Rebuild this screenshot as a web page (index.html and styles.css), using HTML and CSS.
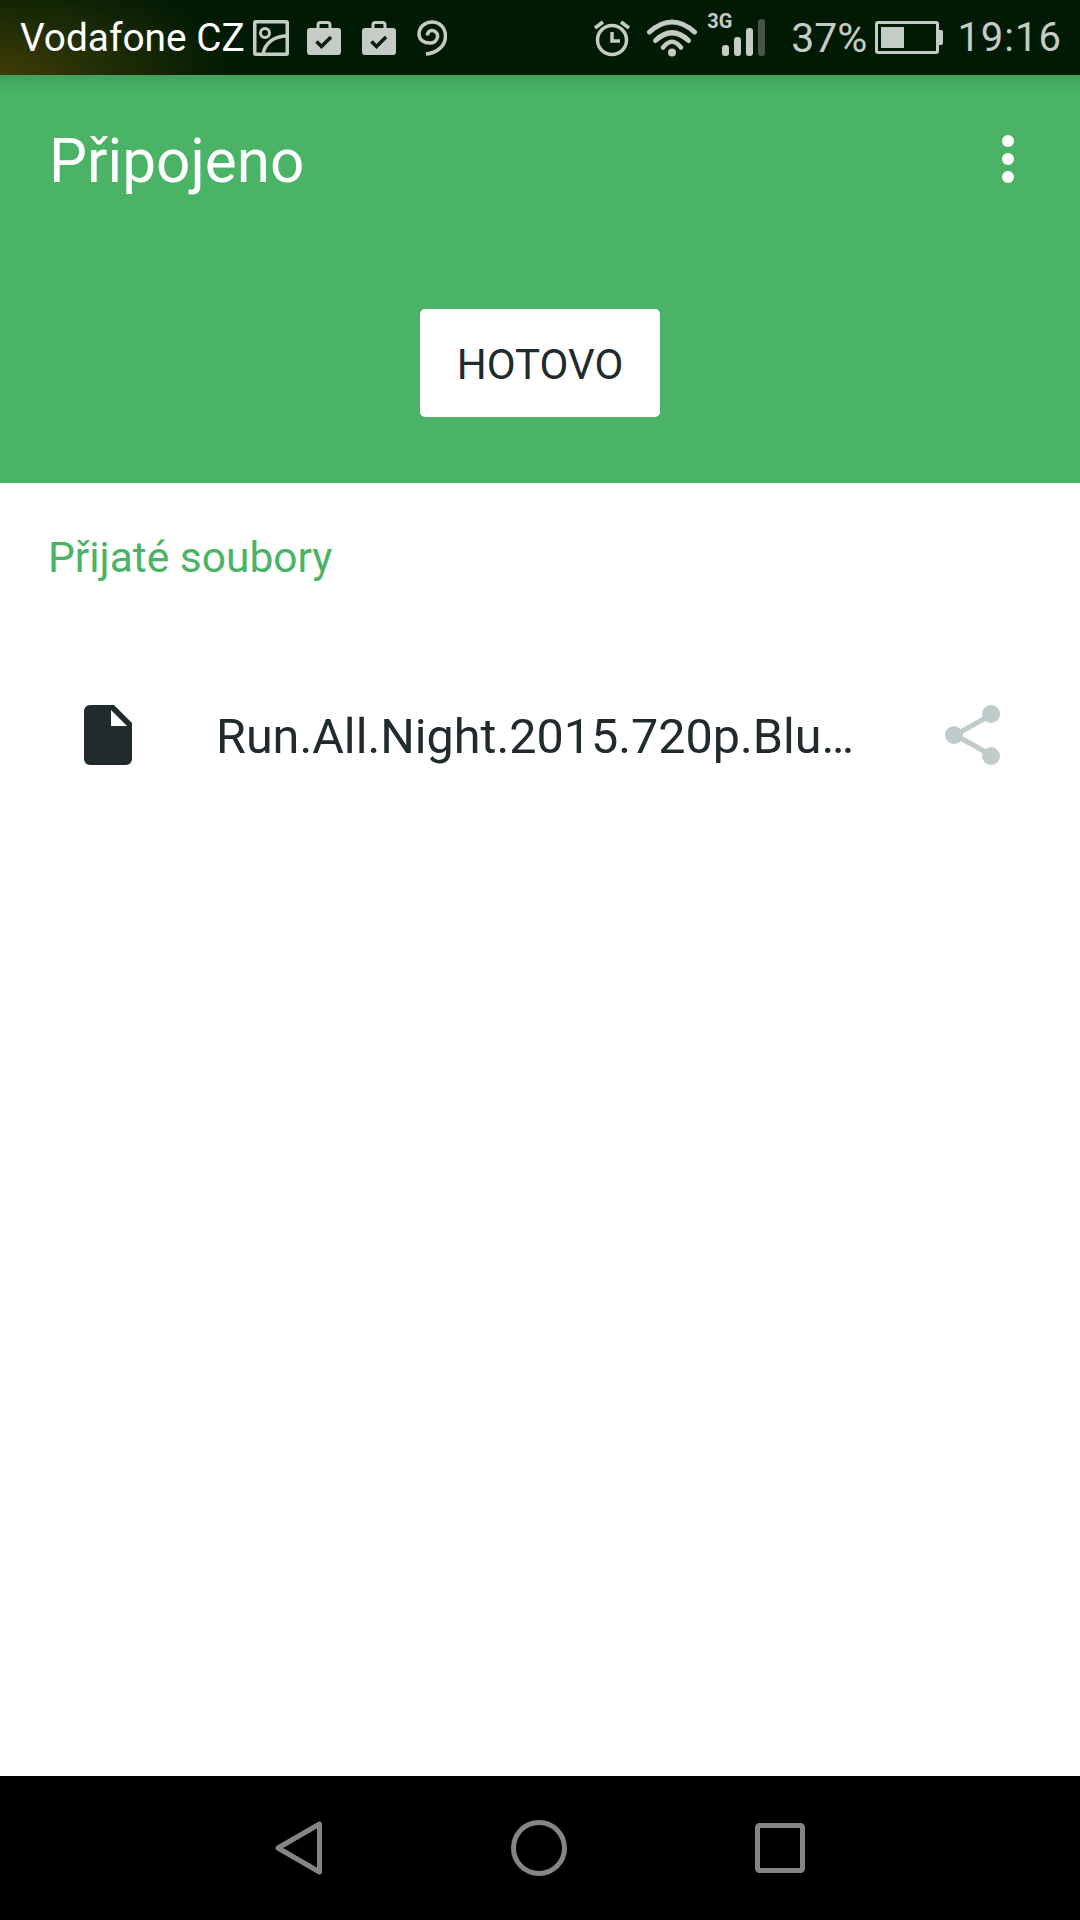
FILE: index.html
```html
<!DOCTYPE html>
<html lang="cs">

<head>
  <meta charset="UTF-8">
  <meta name="viewport" content="width=device-width, initial-scale=1.0">
  <title>Připojeno</title>
  <link rel="stylesheet" href="styles.css">
</head>

<body>
  <div class="status-bar">
    <div class="status-left">
      <span class="carrier">Vodafone CZ</span>
      <svg class="ic-image" width="36" height="36" viewBox="0 0 36 36">
        <rect x="1.750" y="1.750" width="32.500" height="32.500" rx="1" fill="none" stroke="#c5ccc5" stroke-width="3.500" />
        <circle cx="12" cy="13" r="4.500" fill="none" stroke="#c5ccc5" stroke-width="3" />
        <path d="M10 34C12 23 21 16 34 16" fill="none" stroke="#c5ccc5" stroke-width="3.500" />
      </svg>
      <svg class="ic-work" width="34" height="34" viewBox="0 0 34 34">
        <path d="M3 7h28a3 3 0 0 1 3 3v21a3 3 0 0 1-3 3H3a3 3 0 0 1-3-3V10a3 3 0 0 1 3-3z" fill="#c5ccc5" />
        <path d="M11 8V4a2.500 2.500 0 0 1 2.500-2.500h7A2.500 2.500 0 0 1 23 4v4" fill="none" stroke="#c5ccc5" stroke-width="3" />
        <path d="M9.500 20.500l5 5 9.500-9.500" fill="none" stroke="#0c1c0a" stroke-width="3.500" />
      </svg>
      <svg class="ic-work" width="34" height="34" viewBox="0 0 34 34">
        <path d="M3 7h28a3 3 0 0 1 3 3v21a3 3 0 0 1-3 3H3a3 3 0 0 1-3-3V10a3 3 0 0 1 3-3z" fill="#c5ccc5" />
        <path d="M11 8V4a2.500 2.500 0 0 1 2.500-2.500h7A2.500 2.500 0 0 1 23 4v4" fill="none" stroke="#c5ccc5" stroke-width="3" />
        <path d="M9.500 20.500l5 5 9.500-9.500" fill="none" stroke="#0c1c0a" stroke-width="3.500" />
      </svg>
      <svg class="ic-swirl" width="30" height="36" viewBox="0 0 30 36">
        <path d="M10.500 15.500C10.500 12 13 10 15.500 10.500C19 11 21 14 20.500 17C20 21 16.500 23 13 23C7 23 2 20 2 14C2 7 8 2 15 2C23 2 28.500 8 28.500 16C28.500 26 20 33 9 34" fill="none" stroke="#c5ccc5" stroke-width="3.500" />
      </svg>
    </div>
    <div class="status-right">
      <svg class="ic-alarm" width="36" height="38" viewBox="0 0 36 38">
        <circle cx="18" cy="21" r="14.500" fill="none" stroke="#c5ccc5" stroke-width="3.500" />
        <path d="M18 13v9h8" fill="none" stroke="#c5ccc5" stroke-width="3.500" />
        <path d="M1 9l8-6M35 9l-8-6" fill="none" stroke="#c5ccc5" stroke-width="3.500" />
      </svg>
      <svg class="ic-wifi" width="50" height="38" viewBox="0 0 50 38">
        <path d="M2.500 13Q25-7 47.500 13" fill="none" stroke="#c5ccc5" stroke-width="5" stroke-linecap="round" />
        <path d="M8.500 21.500Q25 6 41.500 21.500" fill="none" stroke="#c5ccc5" stroke-width="5" stroke-linecap="round" />
        <path d="M16 28.500Q25 17 34 28.500" fill="none" stroke="#c5ccc5" stroke-width="4.500" stroke-linecap="round" />
        <circle cx="25" cy="33.500" r="4" fill="#c5ccc5" />
      </svg>
      <div class="signal">
        <span class="net-type">3G</span>
        <div class="bars">
          <i class="bar bar-1"></i>
          <i class="bar bar-2"></i>
          <i class="bar bar-3"></i>
          <i class="bar bar-4"></i>
        </div>
      </div>
      <span class="battery-pct">37%</span>
      <div class="battery">
        <div class="battery-level"></div>
      </div>
      <span class="clock">19:16</span>
    </div>
  </div>

  <div class="header">
    <div class="toolbar">
      <h1>Připojeno</h1>
      <div class="overflow">
        <i></i>
        <i></i>
        <i></i>
      </div>
    </div>
    <button class="done-btn">HOTOVO</button>
  </div>

  <div class="content">
    <p class="section-title">Přijaté soubory</p>
    <div class="file-row">
      <svg class="ic-file" width="48" height="60" viewBox="0 0 48 60">
        <path d="M6 0h24l18 18v36a6 6 0 0 1-6 6H6a6 6 0 0 1-6-6V6a6 6 0 0 1 6-6z" fill="#212b2e" />
        <path d="M27 5l16 16H27z" fill="#fff" />
      </svg>
      <span class="file-name">Run.All.Night.2015.720p.Blu…</span>
      <svg class="ic-share" width="56" height="60" viewBox="0 0 56 60">
        <path d="M46 10L10 30l36 20" fill="none" stroke="#c0cccc" stroke-width="5" />
        <circle cx="46" cy="9" r="9" fill="#c0cccc" />
        <circle cx="9" cy="30" r="9" fill="#c0cccc" />
        <circle cx="46" cy="51" r="9" fill="#c0cccc" />
      </svg>
    </div>
  </div>

  <div class="nav-bar">
    <svg width="48" height="54" viewBox="0 0 48 54">
      <path d="M44.500 3v48L3 27z" fill="none" stroke="#858585" stroke-width="5" stroke-linejoin="round" />
    </svg>
    <svg width="56" height="56" viewBox="0 0 56 56">
      <circle cx="28" cy="28" r="25.500" fill="none" stroke="#858585" stroke-width="5" />
    </svg>
    <svg width="50" height="50" viewBox="0 0 50 50">
      <rect x="2.500" y="2.500" width="45" height="45" rx="2" fill="none" stroke="#858585" stroke-width="5" />
    </svg>
  </div>
</body>

</html>
```

FILE: styles.css
```css
* {
  box-sizing: border-box;
}

body {
  font-family: Roboto, "Liberation Sans", sans-serif;
  margin: 0;
  padding: 0;
  width: 1080px;
  height: 1920px;
  display: flex;
  flex-direction: column;
  background: #fff;
  overflow: hidden;
}

.status-bar {
  height: 75px;
  display: flex;
  justify-content: space-between;
  align-items: center;
  padding: 0 18px 0 20px;
  background: radial-gradient(ellipse 240px 110px at 0 75px, #403c08 0%, #1a2a05 55%, transparent 100%), #001a03;
}

.status-left,
.status-right {
  display: flex;
  align-items: center;
}

.carrier {
  font-size: 38.800px;
  color: #fff;
  margin-right: 8px;
}

.ic-work {
  margin-left: 21px;
}

.ic-image + .ic-work {
  margin-left: 18px;
}

.ic-swirl {
  margin-left: 21px;
}

.ic-wifi {
  margin-left: 17px;
}

.signal {
  position: relative;
  width: 43px;
  height: 44px;
  margin-left: 25px;
  margin-bottom: 7px;
}

.net-type {
  position: absolute;
  top: -1px;
  left: -15px;
  font-size: 20px;
  line-height: 1;
  font-weight: 700;
  color: #c5ccc5;
}

.bars {
  position: absolute;
  right: 0;
  bottom: 0;
  display: flex;
  align-items: flex-end;
  gap: 5px;
}

.bar {
  display: block;
  width: 7px;
  border-radius: 3px;
  background: #c5ccc5;
}

.bar-1 {
  height: 11px;
}

.bar-2 {
  height: 19px;
}

.bar-3 {
  height: 28px;
}

.bar-4 {
  height: 37px;
  background: #44564a;
}

.battery-pct {
  font-size: 41px;
  color: #c5ccc5;
  margin-left: 26px;
}

.battery {
  position: relative;
  width: 64px;
  height: 33px;
  margin-left: 8px;
  border: 3px solid #c5ccc5;
  border-radius: 3px;
  padding: 3px;
}

.battery::after {
  content: "";
  position: absolute;
  top: 6px;
  right: -7px;
  width: 4px;
  height: 15px;
  background: #c5ccc5;
  border-radius: 0 2px 2px 0;
}

.battery-level {
  width: 23px;
  height: 100%;
  background: #c5ccc5;
}

.clock {
  font-size: 40px;
  letter-spacing: 1px;
  color: #c5ccc5;
  margin-left: 18px;
}

.header {
  height: 408px;
  background: linear-gradient(#40a35c, #4ab366 18px);
  display: flex;
  flex-direction: column;
  align-items: center;
}

.toolbar {
  width: 100%;
  display: flex;
  justify-content: space-between;
  align-items: center;
  padding: 5px 49px 0;
  height: 168px;
}

h1 {
  margin: 0;
  font-size: 60.300px;
  font-weight: 400;
  color: #fff;
}

.overflow {
  display: flex;
  flex-direction: column;
  gap: 6px;
  margin-right: 17px;
  margin-top: -5px;
}

.overflow i {
  display: block;
  width: 12px;
  height: 12px;
  border-radius: 50%;
  background: #fff;
}

.done-btn {
  width: 240px;
  height: 108px;
  margin-top: 66px;
  padding-top: 4px;
  font-family: inherit;
  font-size: 42px;
  color: #212b2e;
  background: #fff;
  border: none;
  border-radius: 5px;
}

.content {
  flex: 1;
  background: #fff;
}

.section-title {
  margin: 50px 0 0 48px;
  font-size: 42.500px;
  line-height: 50px;
  color: #4ab366;
}

.file-row {
  display: flex;
  align-items: center;
  margin-top: 122px;
  padding-left: 84px;
}

.file-name {
  margin-left: 84px;
  padding-top: 3px;
  width: 636px;
  font-size: 48.500px;
  white-space: nowrap;
  color: #212b2e;
}

.ic-share {
  margin-left: 93px;
}

.nav-bar {
  height: 144px;
  background: #000;
  display: flex;
  justify-content: center;
  align-items: center;
  gap: 188px;
}
```
